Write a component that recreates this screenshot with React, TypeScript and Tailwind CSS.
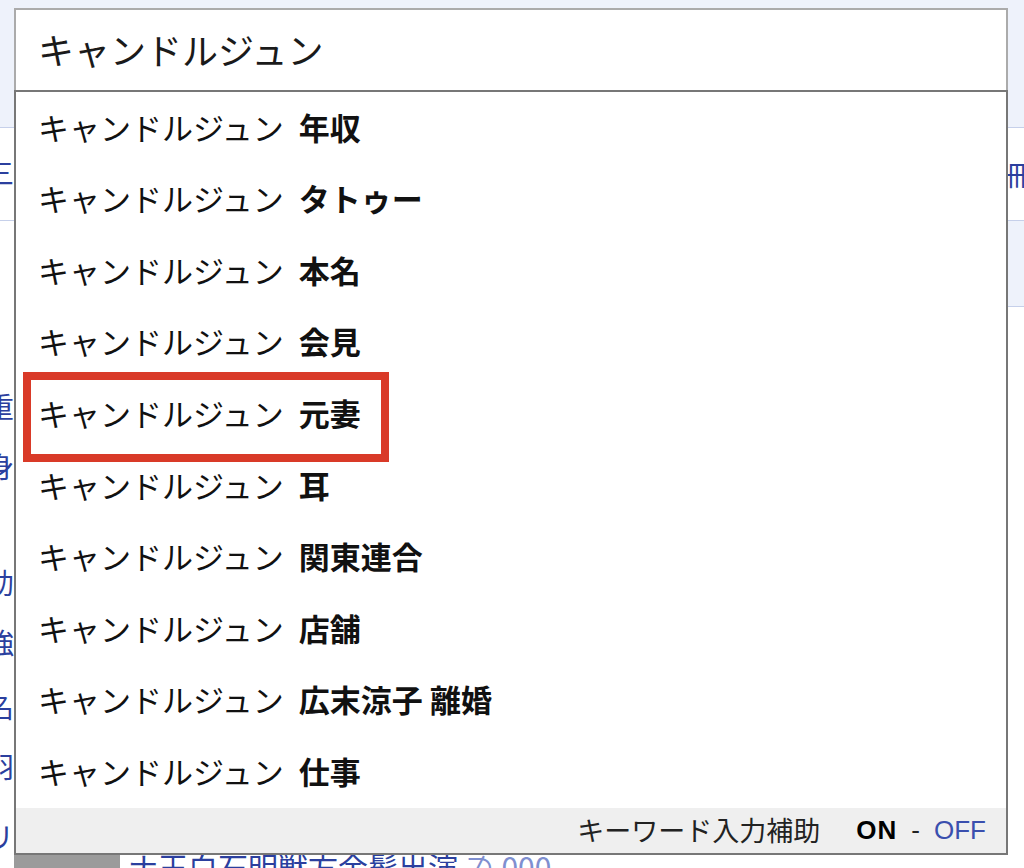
import React from 'react';

const FONT = { fontFamily: '"Noto Sans CJK JP", "Noto Sans", sans-serif' };
const LATIN = { fontFamily: '"Liberation Sans", Arial, sans-serif' };

const PREFIX = 'キャンドルジュン';

const SUGGESTIONS = [
  '年収',
  'タトゥー',
  '本名',
  '会見',
  '元妻',
  '耳',
  '関東連合',
  '店舗',
  '広末涼子 離婚',
  '仕事',
];

// clipped glyphs of the page underneath, left edge
const LEFT_GLYPHS: { ch: string; top: number; gray?: boolean }[] = [
  { ch: '三', top: 158 },
  { ch: '(', top: 330, gray: true },
  { ch: '重', top: 392 },
  { ch: '身', top: 452 },
  { ch: '、', top: 508 },
  { ch: '助', top: 568 },
  { ch: '強', top: 628 },
  { ch: '名', top: 692 },
  { ch: '羽', top: 752 },
  { ch: 'リ', top: 822 },
];

function BackgroundPage() {
  return (
    <div className="relative h-[868px] w-[1024px] overflow-hidden bg-white" style={FONT}>
      {/* header band */}
      <div className="h-[128px] border-b border-[#c6d0ea] bg-[#eef2fb]" />
      {/* tab row */}
      <div className="h-[93px] border-b border-[#c6d0ea] bg-white" />
      <div className="flex">
        <div className="flex-1" />
        <div className="h-[86px] w-[16px] border-b border-[#c6d0ea] bg-[#eef2fb]" />
      </div>

      {LEFT_GLYPHS.map((g) => (
        <span
          key={g.top}
          className={`absolute left-[-14px] text-[28px] leading-none ${g.gray ? 'text-[#888]' : 'text-[#2b3f9e]'}`}
          style={{ top: g.top }}
        >
          {g.ch}
        </span>
      ))}
      <span className="absolute left-[1006px] top-[160px] text-[28px] leading-none text-[#2b3f9e]">冊</span>

      {/* bottom strip */}
      <div className="absolute left-[14px] top-[855px] flex items-start">
        <div className="h-[13px] w-[106px] bg-[#9b9b9b]" />
        <span className="-mt-[4px] whitespace-nowrap pl-[8px] text-[30px] leading-none text-[#2b3f9e]">
          ナ王白石明獣方金髪出演 <span className="text-[#7f8fd0]">⊅ 000</span>
        </span>
      </div>
    </div>
  );
}

export default function App() {
  return (
    <div className="relative h-[868px] w-[1024px] overflow-hidden" style={FONT}>
      <BackgroundPage />

      {/* search box + suggestions */}
      <div className="absolute left-[14px] top-[8px] w-[994px]">
        <div className="flex h-[82px] items-center border-x-2 border-t-2 border-[#ababab] bg-white pb-[2px] pl-[22px] text-[36px] text-[#1a1a1a]">
          {PREFIX}
        </div>
        <div className="border-2 border-[#777] bg-white">
          {SUGGESTIONS.map((s) => (
            <div key={s} className="flex h-[71.6px] items-center pb-[2px] pl-[22px] text-[31px] text-[#111]">
              <span>{PREFIX}</span>
              <span className="ml-[15px] font-bold">{s}</span>
            </div>
          ))}
          <div className="flex h-[45px] items-center justify-end bg-[#efefef] pr-[20px] text-[26px] text-[#222]">
            <span className="text-[27px]">キーワード入力補助</span>
            <span className="ml-[36px] font-bold tracking-[1px] text-black" style={LATIN}>ON</span>
            <span className="mx-[14px] text-[#222]" style={LATIN}>-</span>
            <span className="text-[#3a4fae]" style={LATIN}>OFF</span>
          </div>
        </div>
      </div>

      {/* highlight annotation */}
      <div className="absolute left-[23px] top-[372px] h-[90px] w-[366px] border-[8px] border-[#d93a28]" />
    </div>
  );
}
